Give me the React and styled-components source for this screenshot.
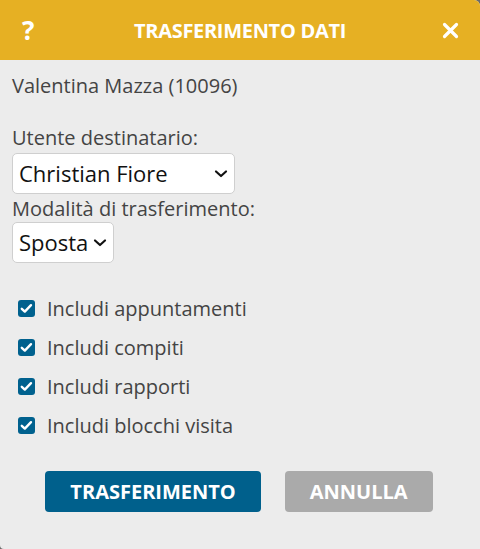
import React from "react";
import styled, { createGlobalStyle } from "styled-components";

const Global = createGlobalStyle`
  html, body { margin: 0; padding: 0; background: #6b6b6b; }
  body { font-family: "Open Sans", "Liberation Sans", sans-serif; }
  * { box-sizing: border-box; }
`;

const Dialog = styled.div`
  width: 480px;
  height: 549px;
  background: #ececec;
  border-top-right-radius: 6px;
  border-bottom-left-radius: 4px;
  overflow: hidden;
  display: flex;
  flex-direction: column;
`;

const Header = styled.div`
  height: 60px;
  background: #e6b023;
  display: grid;
  grid-template-columns: 60px 1fr 60px;
  align-items: center;
  color: #fff;
`;

const HeaderIcon = styled.span`
  display: flex;
  align-items: center;
  justify-content: ${(p) => p.$align};
  padding: 0 ${(p) => p.$pad}px;
  font-size: 26px;
  font-weight: 700;
  line-height: 1;
`;

const Title = styled.h1`
  margin: 0;
  text-align: center;
  font-size: 20px;
  font-weight: 700;
  letter-spacing: -0.3px;
`;

const Body = styled.div`
  padding: 12px 12px 0 12px;
  display: flex;
  flex-direction: column;
  color: #444;
  font-size: 20px;
  line-height: 27px;
`;

const Owner = styled.div`
  margin-bottom: 25px;
`;

const Label = styled.div`
  margin-bottom: ${(p) => p.$mb}px;
`;

const SelectBox = styled.div`
  width: ${(p) => p.$w}px;
  height: 41px;
  background: #fff;
  border: 1px solid #cfcfcf;
  border-radius: 5px;
  display: flex;
  align-items: center;
  justify-content: space-between;
  padding: 0 6px 0 6px;
  color: #111;
  font-size: 22px;
  margin-bottom: ${(p) => p.$mb}px;
`;

const Chevron = () => (
  <svg width="14" height="10" viewBox="0 0 14 10">
    <path d="M2 2.5 L7 7 L12 2.5" fill="none" stroke="#111" strokeWidth="2.2" strokeLinecap="round" strokeLinejoin="round" />
  </svg>
);

const Checks = styled.div`
  margin-top: 32px;
  display: flex;
  flex-direction: column;
  gap: 12px;
  padding-left: 6px;
`;

const CheckRow = styled.label`
  display: flex;
  align-items: center;
  gap: 12px;
  height: 27px;
`;

const Box = styled.span`
  width: 17px;
  height: 17px;
  border-radius: 3px;
  background: #00618e;
  display: flex;
  align-items: center;
  justify-content: center;
`;

const Buttons = styled.div`
  margin-top: 32px;
  display: flex;
  justify-content: center;
  gap: 24px;
  padding-right: 2px;
`;

const Button = styled.button`
  height: 41px;
  border: none;
  border-radius: 4px;
  padding: 0 ${(p) => p.$pad}px;
  background: ${(p) => p.$bg};
  color: #fff;
  font-family: "Open Sans", "Liberation Sans", sans-serif;
  font-size: 20px;
  font-weight: 700;
`;

const Check = ({ label }) => (
  <CheckRow>
    <Box>
      <svg width="13" height="11" viewBox="0 0 13 11">
        <path d="M1.8 5.8 L4.8 8.6 L11 2.2" fill="none" stroke="#fff" strokeWidth="2.4" strokeLinecap="round" strokeLinejoin="round" />
      </svg>
    </Box>
    {label}
  </CheckRow>
);

export default function App() {
  return (
    <>
      <Global />
      <Dialog>
        <Header>
          <HeaderIcon $align="flex-start" $pad={22}>?</HeaderIcon>
          <Title>TRASFERIMENTO DATI</Title>
          <HeaderIcon $align="flex-end" $pad={21}>
            <svg width="17" height="17" viewBox="0 0 17 17">
              <path d="M2.5 2.5 L14.5 14.5 M14.5 2.5 L2.5 14.5" stroke="#fff" strokeWidth="3.2" strokeLinecap="round" />
            </svg>
          </HeaderIcon>
        </Header>
        <Body>
          <Owner>Valentina Mazza (10096)</Owner>
          <Label $mb={2}>Utente destinatario:</Label>
          <SelectBox $w={223} $mb={1}>
            Christian Fiore
            <Chevron />
          </SelectBox>
          <Label $mb={0}>Modalità di trasferimento:</Label>
          <SelectBox $w={102} $mb={0}>
            Sposta
            <Chevron />
          </SelectBox>
          <Checks>
            <Check label="Includi appuntamenti" />
            <Check label="Includi compiti" />
            <Check label="Includi rapporti" />
            <Check label="Includi blocchi visita" />
          </Checks>
          <Buttons>
            <Button $bg="#00608c" $pad={25}>TRASFERIMENTO</Button>
            <Button $bg="#aaaaaa" $pad={25}>ANNULLA</Button>
          </Buttons>
        </Body>
      </Dialog>
    </>
  );
}
